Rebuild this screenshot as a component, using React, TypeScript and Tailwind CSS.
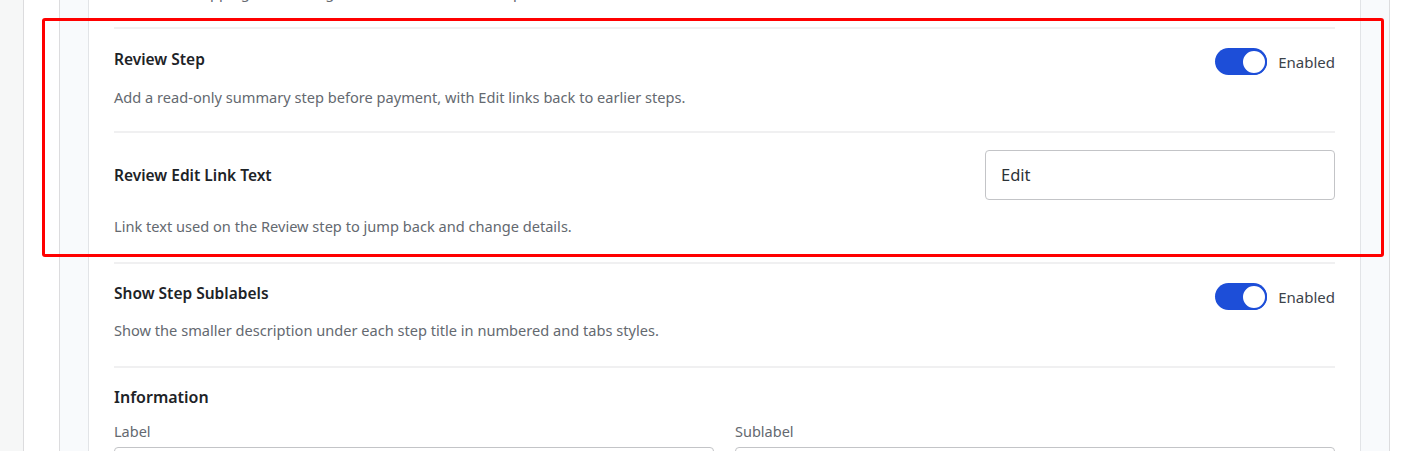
import React from 'react';

const font = { fontFamily: '"Noto Sans", "Open Sans", sans-serif' };

// Blue pill switch with a white knob on the right
const Toggle = () => (
  <div className="flex items-center gap-[11px]">
    <div className="flex h-[27px] w-[52px] items-center justify-end rounded-full bg-[#1d4ed8]">
      <div className="h-[26px] w-[26px] rounded-full border-2 border-[#1d4ed8] bg-white" />
    </div>
    <span className="text-[15px] leading-5 text-[#3c434a]">Enabled</span>
  </div>
);

const Divider = () => <div className="h-[2px] w-full bg-[#f0f0f1]" />;

export default function App() {
  return (
    <div className="relative h-[451px] overflow-hidden bg-[#f6f7f7] pl-[23px]" style={font}>
      <div className="flex h-full border-l border-[#dcdcde] bg-white pl-[35px]">
        <div className="h-full w-[1331px] border-x border-[#dcdcde] bg-[#f8fafc] px-[28px]">
          <div className="flow-root h-full border-x border-[#e2e4e7] bg-white px-[25px]">
            {/* tail of the previous setting's description */}
            <p className="mt-[-18px] text-[14.6px] leading-5 text-[#646970]">
              Collect the shipping method together with the address step.
            </p>
            <div className="mt-[25px]">
              <Divider />
            </div>

            {/* Review Step */}
            <div className="pt-[19px] pb-[24px]">
              <div className="flex items-start justify-between">
                <h3 className="text-[15.5px] font-semibold leading-[22px] text-[#1d2327]">Review Step</h3>
                <Toggle />
              </div>
              <p className="mt-[12px] text-[14.6px] leading-5 text-[#646970]">
                Add a read-only summary step before payment, with Edit links back to earlier steps.
              </p>
            </div>
            <Divider />

            {/* Review Edit Link Text */}
            <div className="pt-[17px] pb-[26px]">
              <div className="flex h-[50px] items-center justify-between">
                <h3 className="text-[15.5px] font-semibold leading-[22px] text-[#1d2327]">Review Edit Link Text</h3>
                <div className="flex h-[50px] w-[350px] items-center rounded-[4px] border border-[#c3c4c7] px-[15px] text-[16.5px] text-[#2c3338]">
                  Edit
                </div>
              </div>
              <p className="mt-[16px] text-[14.6px] leading-5 text-[#646970]">
                Link text used on the Review step to jump back and change details.
              </p>
            </div>
            <Divider />

            {/* Show Step Sublabels */}
            <div className="pt-[19px] pb-[26px]">
              <div className="flex items-start justify-between">
                <h3 className="mt-[-1px] text-[15.5px] font-semibold leading-[22px] text-[#1d2327]">Show Step Sublabels</h3>
                <Toggle />
              </div>
              <p className="mt-[10px] text-[14.6px] leading-5 text-[#646970]">
                Show the smaller description under each step title in numbered and tabs styles.
              </p>
            </div>
            <Divider />

            {/* Information */}
            <div className="pt-[17px]">
              <h3 className="text-[16px] font-semibold leading-6 text-[#1d2327]">Information</h3>
              <div className="mt-[12px] grid grid-cols-2 gap-[21px]">
                <div>
                  <label className="block text-[14.5px] leading-5 text-[#646970]">Label</label>
                  <div className="mt-[6px] h-[40px] rounded-[4px] border border-[#c3c4c7]" />
                </div>
                <div>
                  <label className="block text-[14.5px] leading-5 text-[#646970]">Sublabel</label>
                  <div className="mt-[6px] h-[40px] rounded-[4px] border border-[#c3c4c7]" />
                </div>
              </div>
            </div>
          </div>
        </div>
      </div>

      {/* red highlight annotation */}
      <div className="pointer-events-none absolute left-[42px] top-[18px] h-[239px] w-[1342px] rounded-[3px] border-[3px] border-[#f00]" />
    </div>
  );
}
